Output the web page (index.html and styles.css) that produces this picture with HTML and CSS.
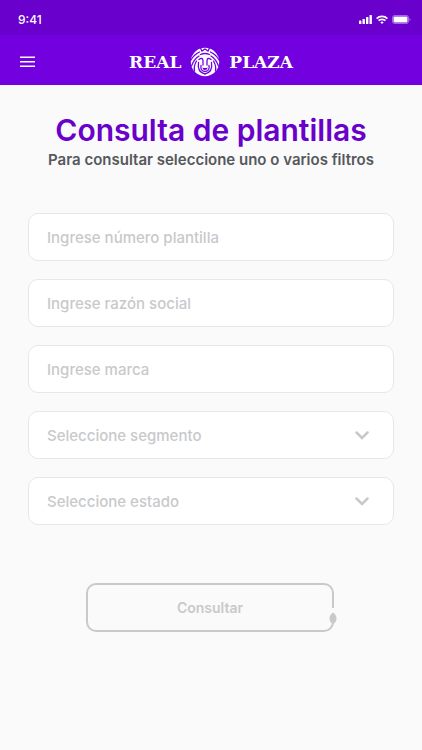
FILE: index.html
```html
<!DOCTYPE html>
<html lang="es">
<head>
<meta charset="utf-8">
<meta name="viewport" content="width=device-width, initial-scale=1">
<title>Consulta de plantillas</title>
<link rel="stylesheet" href="styles.css">
</head>
<body>
<div class="status">
  <span>9:41</span>
  <div class="status-icons">
    <svg width="13" height="10" viewBox="0 0 13 10" fill="currentColor"><rect y="5.500" width="2.400" height="3.500" rx=".6"/><rect x="3.500" y="4" width="2.400" height="5" rx=".6"/><rect x="7" y="2" width="2.400" height="7" rx=".6"/><rect x="10.500" y="0" width="2.400" height="9" rx=".6"/></svg>
    <svg width="12" height="10" viewBox="0 0 12 10" fill="none" stroke="currentColor" stroke-width="1.800"><path d="M.6 3.600a7.700 7.700 0 0 1 10.800 0M2.600 5.700a4.800 4.800 0 0 1 6.800 0"/><path d="M6 9 4.300 7.300a2.400 2.400 0 0 1 3.400 0z" fill="currentColor" stroke="none"/></svg>
    <svg width="19" height="10" viewBox="0 0 19 10"><rect x=".5" y=".5" width="16" height="8" rx="2" fill="none" stroke="currentColor" stroke-opacity=".4"/><rect x="1.500" y="1.500" width="14" height="6" rx="1" fill="currentColor"/><path d="M17.500 3v3q1-.5 1-1.500t-1-1.500" fill="currentColor" opacity=".45"/></svg>
  </div>
</div>
<header class="header">
  <button class="menu" type="button" aria-label="Menú">
    <svg width="15" height="12" viewBox="0 0 15 12" stroke="currentColor" stroke-width="1.500"><path d="M0 1.200h15M0 5.700h15M0 10.200h15"/></svg>
  </button>
  <a class="brand" href="#">
    <span>REAL</span>
    <svg width="30" height="30" viewBox="0 0 30 30">
      <circle cx="15" cy="15" r="14.200" fill="#fff"/>
      <g fill="none" stroke="#7200df" stroke-width="1.300" stroke-linecap="round">
        <path d="M10.500 1 12 4l3-2 3 2 1.500-3M10.500 7.500q4.500-2 9 0"/>
        <path d="M9.500 5Q4 7.500 1 13M9 9Q4 12 1.500 19M6.500 14q-3 5-2 10"/>
        <path d="M20.500 5Q26 7.500 29 13M21 9q5 3 7.500 10M23.500 14q3 5 2 10"/>
        <path d="M9 12.500q3.500-2.500 4 1v4.500M21 12.500q-3.500-2.500-4 1v4.500"/>
        <path d="M8.500 15.500Q7 25 15 27q8-2 6.500-11.500"/>
        <path d="M11 18.500Q10 24 15 24.500q5-.5 4-6"/>
      </g>
      <path d="M12.500 20.500q2.500 1 5 0 0 2.500-2.500 2.500t-2.500-2.500" fill="#7200df"/>
    </svg>
    <span>PLAZA</span>
  </a>
</header>
<main>
  <h1>Consulta de plantillas</h1>
  <p class="intro">Para consultar seleccione uno o varios filtros</p>
  <form>
    <input class="field" type="text" aria-label="Número plantilla" placeholder="Ingrese número plantilla">
    <input class="field" type="text" aria-label="Razón social" placeholder="Ingrese razón social">
    <input class="field" type="text" aria-label="Marca" placeholder="Ingrese marca">
    <div class="select">
      <select class="field" aria-label="Segmento"><option>Seleccione segmento</option></select>
      <svg class="chevron" width="14" height="10" viewBox="0 0 14 10"><path d="m1.500 1.500 5.500 5.500 5.500-5.500"/></svg>
    </div>
    <div class="select">
      <select class="field" aria-label="Estado"><option>Seleccione estado</option></select>
      <svg class="chevron" width="14" height="10" viewBox="0 0 14 10"><path d="m1.500 1.500 5.500 5.500 5.500-5.500"/></svg>
    </div>
    <button class="submit" type="button">Consultar
      <svg class="leaf" width="8" height="18" viewBox="0 0 8 18"><path d="M0 0h8v6H0z" fill="#fafafa"/><path d="M4 4.500q3.500 2.500 3.500 6T4 16Q.5 14 .5 10.500T4 4.500" fill="#c8c9cb"/></svg>
    </button>
  </form>
</main>
</body>
</html>
```
FILE: styles.css
```css
* { box-sizing: border-box; }

body {
  margin: 0;
  background: #fafafa;
  font-family: Inter, sans-serif;
}

.status {
  display: flex;
  align-items: center;
  justify-content: space-between;
  height: 35px;
  padding: 4px 11px 0 18px;
  background: #6900cb;
  color: #fff;
  font: 500 12px/16px Inter, sans-serif;
}

.status-icons { display: flex; gap: 4px; }

.header {
  display: grid;
  grid-template-columns: 1fr auto 1fr;
  align-items: center;
  height: 50px;
  padding: 4px 20px 0;
  background: #7200df;
  color: #fff;
}

.menu {
  display: flex;
  justify-self: start;
  padding: 0;
  border: 0;
  background: none;
  color: inherit;
}

.brand {
  display: flex;
  align-items: center;
  gap: 9px;
  color: inherit;
  font: bold 17px/24px "DejaVu Serif", serif;
  text-decoration: none;
}

main {
  padding: 25px 28px;
  text-align: center;
}

h1 {
  margin: 0;
  color: #6900cb;
  font-size: 30px;
  font-weight: 600;
  line-height: 40px;
}

.intro {
  margin: 0 -20px;
  color: #55585c;
  font-size: 15px;
  font-weight: 600;
  line-height: 20px;
}

form {
  display: flex;
  flex-direction: column;
  gap: 18px;
  margin-top: 43px;
}

.field {
  display: block;
  width: 100%;
  height: 48px;
  padding: 0 18px;
  border: 1px solid #e7e7e8;
  border-radius: 10px;
  appearance: none;
  background: #fff;
  color: #c8c9cb;
  font: 500 15px/20px Inter, sans-serif;
}

.field::placeholder { color: #c8c9cb; opacity: 1; }

.select { position: relative; }

.select .field { padding-top: 2px; }

.chevron {
  position: absolute;
  top: 20px;
  right: 25px;
  fill: none;
  stroke: #c8c9cb;
  stroke-width: 2.5;
  stroke-linecap: round;
  pointer-events: none;
}

.submit {
  position: relative;
  height: 49px;
  margin: 40px 60px 0 58px;
  border: 2px solid #c8c9cb;
  border-radius: 10px;
  background: transparent;
  color: #c8c9cb;
  font: 600 14px/20px Inter, sans-serif;
}

.leaf {
  position: absolute;
  right: -5px;
  bottom: 4px;
}
```
